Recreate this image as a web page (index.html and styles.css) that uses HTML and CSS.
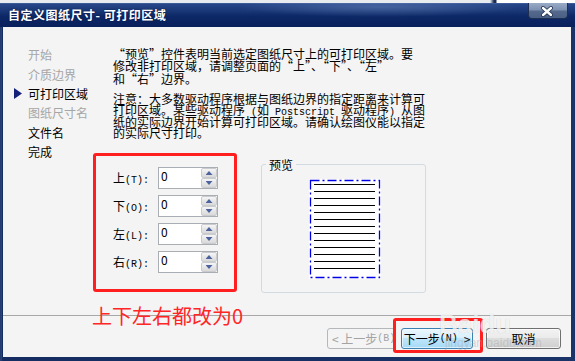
FILE: index.html
```html
<!DOCTYPE html>
<html lang="zh-CN">
<head>
<meta charset="utf-8">
<title>自定义图纸尺寸- 可打印区域</title>
<link rel="stylesheet" href="styles.css">
</head>
<body>
<div class="topstrip"></div>
<div class="window">
  <div class="titlebar">
    <span class="title">自定义图纸尺寸- 可打印区域</span>
    <div class="close">
      <svg width="40" height="16" viewBox="0 0 40 16"><path d="M16 5 L24 12 M24 5 L16 12" stroke="#1d2c4c" stroke-width="4" stroke-linecap="round"/><path d="M16 5 L24 12 M24 5 L16 12" stroke="#ffffff" stroke-width="2.4" stroke-linecap="round"/></svg>
    </div>
  </div>
  <div class="client">
    <div class="main">
      <ul class="steps">
        <li class="step">开始</li>
        <li class="step">介质边界</li>
        <li class="step current">可打印区域</li>
        <li class="step">图纸尺寸名</li>
        <li class="step enabled">文件名</li>
        <li class="step enabled">完成</li>
      </ul>
      <div class="pane">
        <p class="p1">
          <span class="ln">“预览”控件表明当前选定图纸尺寸上的可打印区域。要</span>
          <span class="ln">修改非打印区域，请调整页面的“上”、“下”、“左”</span>
          <span class="ln">和“右”边界。</span>
        </p>
        <p class="p2">
          <span class="ln">注意：大多数驱动程序根据与图纸边界的指定距离来计算可</span>
          <span class="ln">打印区域。某些驱动程序<span class="mono"> (</span>如<span class="mono"> Postscript </span>驱动程序<span class="mono">) </span>从图</span>
          <span class="ln">纸的实际边界开始计算可打印区域。请确认绘图仪能以指定</span>
          <span class="ln">的实际尺寸打印。</span>
        </p>
        <div class="controls">
          <div class="margins">
            <div class="mrow"><span class="mlabel">上<span class="mono">(T):</span></span><div class="spin"><span class="val">0</span><span class="btns"><span class="sb up"></span><span class="sb down"></span></span></div></div>
            <div class="mrow"><span class="mlabel">下<span class="mono">(O):</span></span><div class="spin"><span class="val">0</span><span class="btns"><span class="sb up"></span><span class="sb down"></span></span></div></div>
            <div class="mrow"><span class="mlabel">左<span class="mono">(L):</span></span><div class="spin"><span class="val">0</span><span class="btns"><span class="sb up"></span><span class="sb down"></span></span></div></div>
            <div class="mrow"><span class="mlabel">右<span class="mono">(R):</span></span><div class="spin"><span class="val">0</span><span class="btns"><span class="sb up"></span><span class="sb down"></span></span></div></div>
          </div>
          <fieldset class="preview">
            <legend>预览</legend>
            <svg class="page" width="72" height="100" viewBox="0 0 72 100">
              <rect x="0" y="0" width="72" height="100" fill="#ffffff"/>
              <rect x="1.5" y="1.5" width="69" height="97" fill="none" stroke="#0000e6" stroke-width="1.3" stroke-dasharray="9 3 2 3"/>
              <g stroke="#000" stroke-width="1.2">
                <line x1="5" x2="66" y1="5.5" y2="5.5"/>
                <line x1="5" x2="66" y1="12.5" y2="12.5"/>
                <line x1="5" x2="66" y1="19.5" y2="19.5"/>
                <line x1="5" x2="66" y1="26.5" y2="26.5"/>
                <line x1="5" x2="66" y1="33.5" y2="33.5"/>
                <line x1="5" x2="66" y1="40.5" y2="40.5"/>
                <line x1="5" x2="66" y1="47.5" y2="47.5"/>
                <line x1="5" x2="66" y1="54.5" y2="54.5"/>
                <line x1="5" x2="66" y1="61.5" y2="61.5"/>
                <line x1="5" x2="66" y1="68.5" y2="68.5"/>
                <line x1="5" x2="66" y1="75.5" y2="75.5"/>
                <line x1="5" x2="66" y1="82.5" y2="82.5"/>
                <line x1="5" x2="66" y1="89.5" y2="89.5"/>
              </g>
            </svg>
          </fieldset>
        </div>
      </div>
    </div>
    <div class="sep"></div>
    <div class="buttons">
      <span class="btn back">&lt; 上一步<span class="mono">(B)</span></span>
      <span class="btn next">下一步<span class="mono">(N)&nbsp;</span>&gt;</span>
      <span class="btn cancel">取消</span>
    </div>

    <div class="mark mark-box"></div>
    <div class="mark mark-next"></div>
    <div class="mark-text">上下左右都改为0</div>
    <div class="wm-big">Baidu</div>
    <div class="wm-small">jingyan.baidu.com</div>
  </div>
</div>
</body>
</html>
```

FILE: styles.css
```css
html, body {
  margin: 0;
  padding: 0;
}

body {
  width: 575px;
  height: 361px;
  overflow: hidden;
  background: #eef0f2;
  font-family: "Noto Sans CJK SC", "Noto Sans", sans-serif;
  font-size: 12px;
  color: #000;
}

.mono {
  font-family: "Liberation Mono", "DejaVu Sans Mono", monospace;
  font-size: 10px;
  white-space: pre;
}

.topstrip {
  height: 3px;
  background: linear-gradient(90deg, #e9ecef 0, #e9ecef 490px, #1a2c55 494px, #1a2c55 496px, #ffffff 497px);
}

.window {
  height: 358px;
  display: flex;
  flex-direction: column;
  background: linear-gradient(90deg, #0d1f48 0, #3a5a98 1px, #142c60 2px, #1b3468 100%);
}

.titlebar {
  height: 24px;
  flex: none;
  display: flex;
  align-items: flex-start;
  background:
    radial-gradient(ellipse 140px 10px at 380px 4px, rgba(120, 150, 200, 0.4), rgba(120, 150, 200, 0) 100%),
    linear-gradient(180deg, #4f6ea8 0, #28478a 1px, #1b3978 30%, #0d2866 55%, #08205c 100%);
}

.title {
  padding-left: 8px;
  line-height: 24px;
  color: #ffffff;
  font-weight: bold;
  font-size: 12px;
  letter-spacing: 0.5px;
  text-shadow: 0 0 2px rgba(0, 0, 30, 0.6);
}

.close {
  margin-left: auto;
  margin-right: 7px;
  width: 40px;
  height: 16px;
  box-sizing: border-box;
  border: 1px solid #1f2f52;
  border-top: none;
  border-radius: 0 0 4px 4px;
  background: linear-gradient(180deg, #9aabc6 0, #7d91b2 45%, #55698d 55%, #4a5f84 100%);
  display: flex;
  align-items: center;
  justify-content: center;
}

.close svg {
  display: block;
  margin-left: -2px;
}

.client {
  flex: 1;
  margin: 0 4px 4px 3px;
  background: #f4f4f4;
  position: relative;
  display: flex;
  flex-direction: column;
  overflow: hidden;
}

.main {
  height: 288px;
  flex: none;
  display: flex;
}

.steps {
  list-style: none;
  margin: 0;
  width: 110px;
  flex: none;
  box-sizing: border-box;
  padding: 18px 0 0 11px;
}

.step {
  display: flex;
  align-items: center;
  height: 19.4px;
  color: #a6a6a6;
  white-space: nowrap;
}

.step::before {
  content: "";
  width: 8px;
  height: 11px;
  margin-right: 6px;
  flex: none;
}

.step.enabled,
.step.current {
  color: #000;
}

.step.current::before {
  background: #14207a;
  clip-path: polygon(0 0, 100% 50%, 0 100%);
}

.pane {
  flex: 1;
  padding-top: 21px;
}

.pane p {
  margin: 0;
  white-space: nowrap;
}

.ln {
  display: block;
  overflow: visible;
}

.p1 .ln {
  height: 12.3px;
  line-height: 12.3px;
  font-feature-settings: "fwid" 1;
}

.p2 {
  margin-top: 8.2px !important;
}

.p2 .ln {
  height: 11.4px;
  line-height: 11.4px;
}

.controls {
  display: flex;
  align-items: flex-start;
  margin-top: 28.3px;
}

.margins {
  width: 105px;
  flex: none;
  display: flex;
  flex-direction: column;
  gap: 6px;
}

.mrow {
  display: flex;
  align-items: center;
  height: 22px;
}

.mlabel {
  width: 45px;
  flex: none;
  white-space: nowrap;
}

.spin {
  width: 60px;
  height: 22px;
  box-sizing: border-box;
  border: 1px solid #a9adb4;
  background: #ffffff;
  display: flex;
}

.val {
  flex: 1;
  padding: 2px 0 0 2px;
  line-height: 12px;
}

.btns {
  width: 16px;
  display: flex;
  flex-direction: column;
}

.sb {
  height: 10px;
  box-sizing: border-box;
  border: 1px solid #c9cbcf;
  border-radius: 2px;
  background: linear-gradient(180deg, #f6f6f6 0, #e6e6e6 50%, #d9d9d9 100%);
  display: flex;
  align-items: center;
  justify-content: center;
}

.sb::after {
  content: "";
  width: 7px;
  height: 4px;
  background: #4c63a0;
}

.sb.up::after {
  clip-path: polygon(50% 0, 100% 100%, 0 100%);
}

.sb.down::after {
  clip-path: polygon(0 0, 100% 0, 50% 100%);
}

.preview {
  margin: -8px 0 0 43px;
  padding: 0;
  width: 165px;
  height: 134px;
  box-sizing: border-box;
  border: 1px solid #d3dbe2;
  border-radius: 3px;
  min-width: 0;
}

.preview legend {
  margin-left: 4px;
  padding: 0 3px;
  line-height: 12px;
}

.page {
  display: block;
  margin: 8px 0 0 47px;
}

.sep {
  flex: none;
  height: 1px;
  background: #a8a8a8;
}

.buttons {
  display: flex;
  justify-content: flex-end;
  padding-right: 10px;
  margin-top: 12px;
}

.btn {
  height: 21px;
  box-sizing: border-box;
  border-radius: 3px;
  display: flex;
  align-items: center;
  justify-content: center;
  white-space: nowrap;
  overflow: hidden;
}

.back {
  width: 69px;
  border: 1px solid #b5b8bb;
  background: #f4f4f4;
  color: #a3a3a3;
  justify-content: flex-start;
  padding-left: 4px;
}

.next {
  width: 72px;
  margin-left: 5px;
  border: 1px solid #3c7fb1;
  background: linear-gradient(180deg, #eaf6fd 0, #d9f0fc 45%, #bee6fd 50%, #a7d9f5 100%);
  box-shadow: inset 0 0 0 1px rgba(255, 255, 255, 0.6);
}

.cancel {
  width: 75px;
  margin-left: 13px;
  border: 1px solid #707070;
  background: linear-gradient(180deg, #f2f2f2 0, #ebebeb 45%, #dddddd 50%, #cfcfcf 100%);
  box-shadow: inset 0 0 0 1px rgba(255, 255, 255, 0.7);
}

.mark {
  position: absolute;
  box-sizing: border-box;
  border: 3px solid #ff1f1f;
  border-radius: 3px;
}

.mark-box {
  left: 90px;
  top: 126px;
  width: 144px;
  height: 139px;
}

.mark-next {
  left: 390px;
  top: 291px;
  width: 90px;
  height: 35px;
}

.mark-text {
  position: absolute;
  left: 89px;
  top: 277px;
  font-size: 20px;
  line-height: 24px;
  color: #ff2626;
  white-space: nowrap;
}

.wm-big {
  position: absolute;
  left: 436px;
  top: 282px;
  font-family: "Liberation Sans", sans-serif;
  font-weight: bold;
  font-size: 26px;
  line-height: 30px;
  color: rgba(255, 255, 255, 0.75);
  text-shadow: 0 0 1px rgba(0, 0, 0, 0.18);
  pointer-events: none;
}

.wm-small {
  position: absolute;
  left: 442px;
  top: 309px;
  font-family: "Liberation Sans", sans-serif;
  font-size: 12px;
  line-height: 14px;
  color: rgba(170, 170, 170, 0.45);
  pointer-events: none;
}
```
